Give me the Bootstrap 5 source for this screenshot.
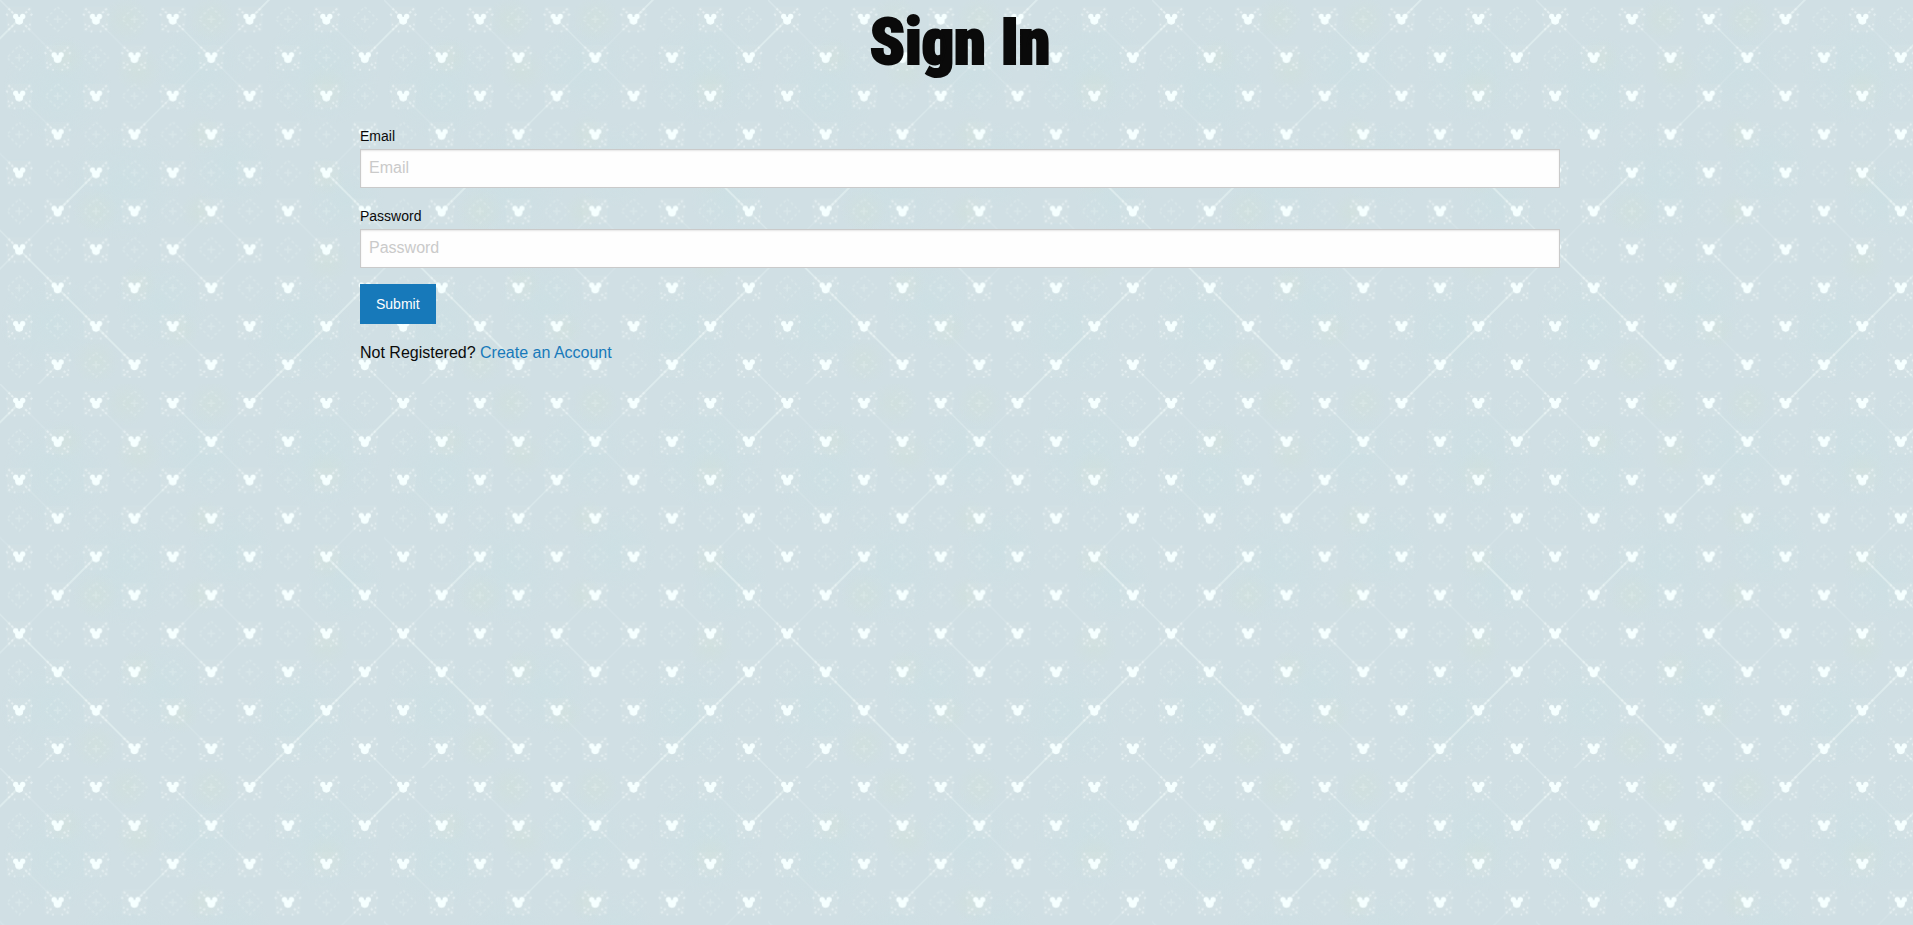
<!DOCTYPE html>
<html lang="en">
<head>
<meta charset="utf-8">
<meta name="viewport" content="width=device-width, initial-scale=1">
<title>Sign In</title>
<link href="https://cdn.jsdelivr.net/npm/bootstrap@5.3.0/dist/css/bootstrap.min.css" rel="stylesheet">
<style>
  body {
    padding-left: 7px;
    font-family: "Liberation Sans", Arial, sans-serif;
    color: #0a0a0a;
    line-height: 25px;
    background-color: #d0dfe4;
    /* 384px wallpaper tile: ten by ten cells, drawn on a 1000 unit grid */
    background-image: url("data:image/svg+xml,%3Csvg xmlns='http://www.w3.org/2000/svg' xmlns:xlink='http://www.w3.org/1999/xlink' width='384' height='384' viewBox='0 0 1000 1000'%3E%3Cdefs%3E%3Cpattern id='c' width='200' height='200' patternUnits='userSpaceOnUse'%3E%3Cg id='m'%3E%3Cpath d='M18 18h64v64H18z' fill='%23dae7e8' fill-opacity='.2'/%3E%3Cpath d='M22 22l14 14M78 22L64 36M22 78l14-14M78 78L64 64M16 36l6 6M84 36l-6 6M36 82h4M60 82h4M20 64h4M76 64h4' stroke='%23eff7f8' stroke-opacity='.6' stroke-width='5' stroke-dasharray='6 5'/%3E%3Cg fill='%23f5ffff'%3E%3Cpath d='M38 44h24l-3 14q-9 10-18 0z'/%3E%3Ccircle cx='50' cy='54' r='10'/%3E%3Ccircle cx='41' cy='43' r='7'/%3E%3Ccircle cx='59' cy='43' r='7'/%3E%3C/g%3E%3Cpath d='M48 36h4v6h-4z' fill='%23d0dfe4'/%3E%3C/g%3E%3Cuse xlink:href='%23m' x='100' y='100'/%3E%3Cg id='s' fill='none' stroke='%23e4eff1' stroke-opacity='.4' stroke-width='4'%3E%3Cpath d='M150 40v20M140 50h20'/%3E%3Cpath d='M150 18l32 32-32 32-32-32z' stroke-dasharray='7 7'/%3E%3C/g%3E%3Cuse xlink:href='%23s' x='-100' y='100'/%3E%3C/pattern%3E%3CradialGradient id='g'%3E%3Cstop stop-color='%23d0e0dc' stop-opacity='.7'/%3E%3Cstop offset='1' stop-color='%23d0e0dc' stop-opacity='0'/%3E%3C/radialGradient%3E%3CradialGradient id='b'%3E%3Cstop stop-color='%23cce0e4' stop-opacity='.7'/%3E%3Cstop offset='1' stop-color='%23cce0e4' stop-opacity='0'/%3E%3C/radialGradient%3E%3C/defs%3E%3Cg fill='url(%23b)'%3E%3Ccircle cx='150' cy='230' r='140'/%3E%3Ccircle cx='520' cy='180' r='120'/%3E%3Ccircle cx='840' cy='180' r='150'/%3E%3Ccircle cx='320' cy='480' r='150'/%3E%3Ccircle cx='600' cy='430' r='110'/%3E%3Ccircle cx='900' cy='520' r='100'/%3E%3Ccircle cx='130' cy='840' r='130'/%3E%3Ccircle cx='420' cy='790' r='120'/%3E%3Ccircle cx='780' cy='860' r='140'/%3E%3C/g%3E%3Cg fill='url(%23g)'%3E%3Ccircle cx='330' cy='50' r='60'/%3E%3Ccircle cx='550' cy='50' r='60'/%3E%3Ccircle cx='170' cy='150' r='50'/%3E%3Ccircle cx='360' cy='180' r='60'/%3E%3Ccircle cx='850' cy='230' r='60'/%3E%3Ccircle cx='530' cy='350' r='50'/%3E%3Ccircle cx='850' cy='460' r='50'/%3E%3Ccircle cx='250' cy='550' r='60'/%3E%3Ccircle cx='520' cy='550' r='50'/%3E%3Ccircle cx='850' cy='680' r='60'/%3E%3Ccircle cx='360' cy='740' r='50'/%3E%3Ccircle cx='470' cy='860' r='50'/%3E%3Ccircle cx='250' cy='940' r='60'/%3E%3C/g%3E%3Cg stroke='%23e0edef' fill='none' stroke-width='4'%3E%3Cpath stroke-opacity='.25' d='M50 50l100 100M550 150l100-100M550 150l100 100M850 50l100 100M50 250l100 100M550 550l-100 100M550 550l100 100-100 100M150 550L50 650M450 250l100-100M450 850l100 100M250 50l100 100M750 550l100 100M50 450l-100-100M950 350l-100 100'/%3E%3Cpath stroke-opacity='.5' d='M450 50l100 100M450 650l100 100M350 350l100-100M950 550l100 100M50 650L-50 550M950 750l100-100M-50 750L50 650M950 950l100 100M-50 -50L50 50M150 950L50 1050'/%3E%3Cpath stroke-width='5' stroke-opacity='.8' d='M50 50L-50 150M950 150L1050 50M650 50l100-100M150 550l100-100M850 450l100 100M50 650l300 300M950 750L650 1050'/%3E%3C/g%3E%3Crect width='1000' height='1000' fill='url(%23c)'/%3E%3C/svg%3E");
    background-size: 384px 384px;
  }
  .page-col { max-width: 1200px; }
  .page-title {
    font-family: "Roboto Condensed", "Liberation Sans", sans-serif;
    font-weight: 900;
    font-size: 64px;
    line-height: 86px;
    margin-bottom: 38px;
    -webkit-text-stroke: 2px #0a0a0a;
  }
  .form-label { font-size: 14px; line-height: 25px; }
  .form-control {
    height: 39px;
    padding: 7px 8px 8px;
    font-size: 16px;
    line-height: 21px;
    color: #0a0a0a;
    background-color: #fefefe;
    border-color: #cacaca;
    box-shadow: inset 0 1px 2px rgba(10, 10, 10, .1);
  }
  .form-control::placeholder { color: #cacaca; }
  .btn-submit {
    --bs-btn-color: #fefefe;
    --bs-btn-bg: #1779ba;
    --bs-btn-hover-color: #fefefe;
    --bs-btn-hover-bg: #14679e;
    --bs-btn-padding-x: 16px;
    --bs-btn-font-size: 14px;
    height: 40px;
    line-height: 14px;
  }
  .account-link { color: #1779ba; }
</style>
</head>
<body>
<main class="page-col container-fluid px-0">
  <h1 class="page-title text-center">Sign In</h1>
  <form>
    <div class="mb-3">
      <label class="form-label d-block mb-0" for="email">Email</label>
      <input class="form-control rounded-0" type="email" id="email" placeholder="Email">
    </div>
    <div class="mb-3">
      <label class="form-label d-block mb-0" for="password">Password</label>
      <input class="form-control rounded-0" type="password" id="password" placeholder="Password">
    </div>
    <button class="btn btn-submit border-0 rounded-0 d-block mb-3" type="submit">Submit</button>
  </form>
  <p class="mb-0">Not Registered? <a class="account-link text-decoration-none" href="#">Create an Account</a></p>
</main>
<script src="https://cdn.jsdelivr.net/npm/bootstrap@5.3.0/dist/js/bootstrap.bundle.min.js"></script>
</body>
</html>
